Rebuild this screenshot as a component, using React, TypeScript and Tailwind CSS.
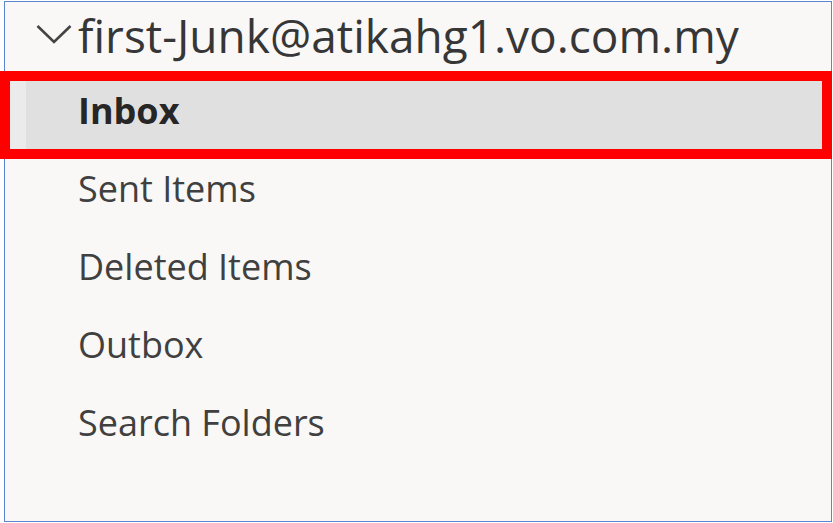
const folders = ['Sent Items', 'Deleted Items', 'Outbox', 'Search Folders']

export default function App() {
    return (
        <div className="w-[833px] h-[523px] bg-white pt-px pl-[4px]" style={{ fontFamily: '"Open Sans", "Noto Sans", sans-serif' }}>
            <div className="relative w-[828px] h-[521px] border border-[#5b86cf] bg-[#f9f8f6]">
                <div className="flex items-center h-[72px] pb-[6px] pl-[31px] text-[#363636]">
                    <svg width="36" height="20" viewBox="0 0 36 20" className="mr-[6px] -mt-[2px]">
                        <path d="M1.5 2 L18 18 L34.5 2" fill="none" stroke="#444" strokeWidth="2.6" />
                    </svg>
                    <span className="text-[46px] leading-none">first-Junk@atikahg1.vo.com.my</span>
                </div>

                <div className="flex h-[78px] bg-[#e0e0e0]">
                    <div className="w-[21px] bg-[#ebebeb]" />
                    <div className="flex items-center pb-[4px] pl-[52px] text-[36px] font-bold text-[#262626]">Inbox</div>
                </div>

                {folders.map((name) => (
                    <div key={name} className="flex items-center h-[78px] pb-[4px] pl-[73px] text-[36px] text-[#404040]">
                        {name}
                    </div>
                ))}

                {/* red annotation box */}
                <div className="absolute left-[-5px] top-[69px] w-[832px] h-[88px] border-[10px] border-[#ff0000]" />
            </div>
        </div>
    )
}
